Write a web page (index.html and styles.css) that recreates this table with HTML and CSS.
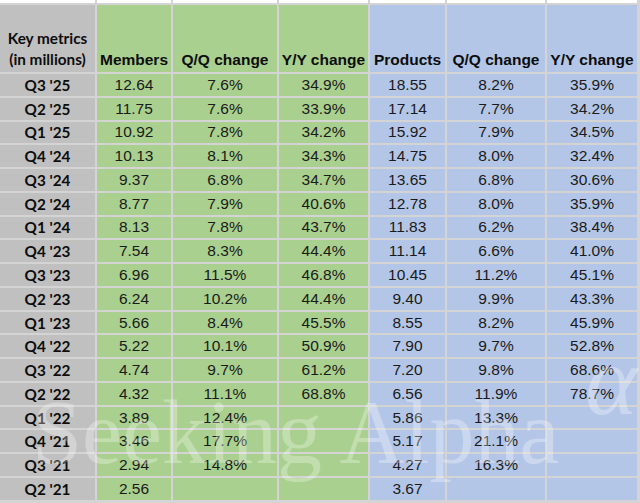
FILE: index.html
```html
<!DOCTYPE html>
<html lang="en">
<head>
<meta charset="utf-8">
<title>Key metrics</title>
<link rel="stylesheet" href="styles.css">
</head>
<body>
<div class="page">
  <div class="sheet">
    <div class="c top"></div><div class="c top"></div><div class="c top"></div><div class="c top"></div><div class="c top"></div><div class="c top"></div><div class="c top"></div>

    <div class="c lab hd"><span>Key metrics<br>(in millions)</span></div>
    <div class="c g hd">Members</div>
    <div class="c g hd">Q/Q change</div>
    <div class="c g hd">Y/Y change</div>
    <div class="c b hd">Products</div>
    <div class="c b hd">Q/Q change</div>
    <div class="c b hd">Y/Y change</div>

    <div class="c lab">Q3 '25</div><div class="c g">12.64</div><div class="c g">7.6%</div><div class="c g">34.9%</div><div class="c b">18.55</div><div class="c b">8.2%</div><div class="c b">35.9%</div>
    <div class="c lab">Q2 '25</div><div class="c g">11.75</div><div class="c g">7.6%</div><div class="c g">33.9%</div><div class="c b">17.14</div><div class="c b">7.7%</div><div class="c b">34.2%</div>
    <div class="c lab">Q1 '25</div><div class="c g">10.92</div><div class="c g">7.8%</div><div class="c g">34.2%</div><div class="c b">15.92</div><div class="c b">7.9%</div><div class="c b">34.5%</div>
    <div class="c lab">Q4 '24</div><div class="c g">10.13</div><div class="c g">8.1%</div><div class="c g">34.3%</div><div class="c b">14.75</div><div class="c b">8.0%</div><div class="c b">32.4%</div>
    <div class="c lab">Q3 '24</div><div class="c g">9.37</div><div class="c g">6.8%</div><div class="c g">34.7%</div><div class="c b">13.65</div><div class="c b">6.8%</div><div class="c b">30.6%</div>
    <div class="c lab">Q2 '24</div><div class="c g">8.77</div><div class="c g">7.9%</div><div class="c g">40.6%</div><div class="c b">12.78</div><div class="c b">8.0%</div><div class="c b">35.9%</div>
    <div class="c lab">Q1 '24</div><div class="c g">8.13</div><div class="c g">7.8%</div><div class="c g">43.7%</div><div class="c b">11.83</div><div class="c b">6.2%</div><div class="c b">38.4%</div>
    <div class="c lab">Q4 '23</div><div class="c g">7.54</div><div class="c g">8.3%</div><div class="c g">44.4%</div><div class="c b">11.14</div><div class="c b">6.6%</div><div class="c b">41.0%</div>
    <div class="c lab">Q3 '23</div><div class="c g">6.96</div><div class="c g">11.5%</div><div class="c g">46.8%</div><div class="c b">10.45</div><div class="c b">11.2%</div><div class="c b">45.1%</div>
    <div class="c lab">Q2 '23</div><div class="c g">6.24</div><div class="c g">10.2%</div><div class="c g">44.4%</div><div class="c b">9.40</div><div class="c b">9.9%</div><div class="c b">43.3%</div>
    <div class="c lab">Q1 '23</div><div class="c g">5.66</div><div class="c g">8.4%</div><div class="c g">45.5%</div><div class="c b">8.55</div><div class="c b">8.2%</div><div class="c b">45.9%</div>
    <div class="c lab">Q4 '22</div><div class="c g">5.22</div><div class="c g">10.1%</div><div class="c g">50.9%</div><div class="c b">7.90</div><div class="c b">9.7%</div><div class="c b">52.8%</div>
    <div class="c lab">Q3 '22</div><div class="c g">4.74</div><div class="c g">9.7%</div><div class="c g">61.2%</div><div class="c b">7.20</div><div class="c b">9.8%</div><div class="c b">68.6%</div>
    <div class="c lab">Q2 '22</div><div class="c g">4.32</div><div class="c g">11.1%</div><div class="c g">68.8%</div><div class="c b">6.56</div><div class="c b">11.9%</div><div class="c b">78.7%</div>
    <div class="c lab">Q1 '22</div><div class="c g">3.89</div><div class="c g">12.4%</div><div class="c g"></div><div class="c b">5.86</div><div class="c b">13.3%</div><div class="c b"></div>
    <div class="c lab">Q4 '21</div><div class="c g">3.46</div><div class="c g">17.7%</div><div class="c g"></div><div class="c b">5.17</div><div class="c b">21.1%</div><div class="c b"></div>
    <div class="c lab">Q3 '21</div><div class="c g">2.94</div><div class="c g">14.8%</div><div class="c g"></div><div class="c b">4.27</div><div class="c b">16.3%</div><div class="c b"></div>
    <div class="c lab">Q2 '21</div><div class="c g">2.56</div><div class="c g"></div><div class="c g"></div><div class="c b">3.67</div><div class="c b"></div><div class="c b"></div>
  </div>
  <div class="watermark">Seeking Alpha<span class="alpha">α</span></div>
</div>
</body>
</html>
```

FILE: styles.css
```css
html, body {
  margin: 0;
  padding: 0;
  background: #d4d4d4;
}

.page {
  position: relative;
  width: 640px;
  height: 503px;
  overflow: hidden;
  background: #d4d4d4;
}

.sheet {
  display: grid;
  grid-template-columns: 95px 74px 104px 89px 75px 98px 90px;
  grid-template-rows: 3px 67px repeat(18, 21.78px);
  gap: 2px;
  background: #d4d4d4;
  font-family: "Liberation Sans", Arial, sans-serif;
  font-size: 15.5px;
  color: #1a1a1a;
}

.c {
  display: flex;
  align-items: center;
  justify-content: center;
  white-space: nowrap;
  line-height: 18px;
}

.top {
  background: #ffffff;
}

.lab {
  background: #c0c0c0;
  font-family: Lato, "Liberation Sans", sans-serif;
  font-weight: 700;
  font-size: 15.3px;
  color: #0d0d0d;
}

.g {
  background: #a9d08e;
}

.b {
  background: #b4c6e7;
}

.hd {
  align-items: flex-end;
  padding-bottom: 3px;
  font-weight: 700;
  color: #0d0d0d;
}

.lab.hd span {
  text-align: center;
  line-height: 20.5px;
}

.watermark {
  position: absolute;
  left: 32px;
  top: 388px;
  font-family: "Liberation Serif", "Times New Roman", serif;
  font-size: 90px;
  line-height: 90px;
  color: #ffffff;
  opacity: 0.3;
  white-space: nowrap;
  pointer-events: none;
}

.alpha {
  position: absolute;
  left: 553px;
  top: -57px;
  font-size: 100px;
  line-height: 100px;
  font-style: italic;
}
```
